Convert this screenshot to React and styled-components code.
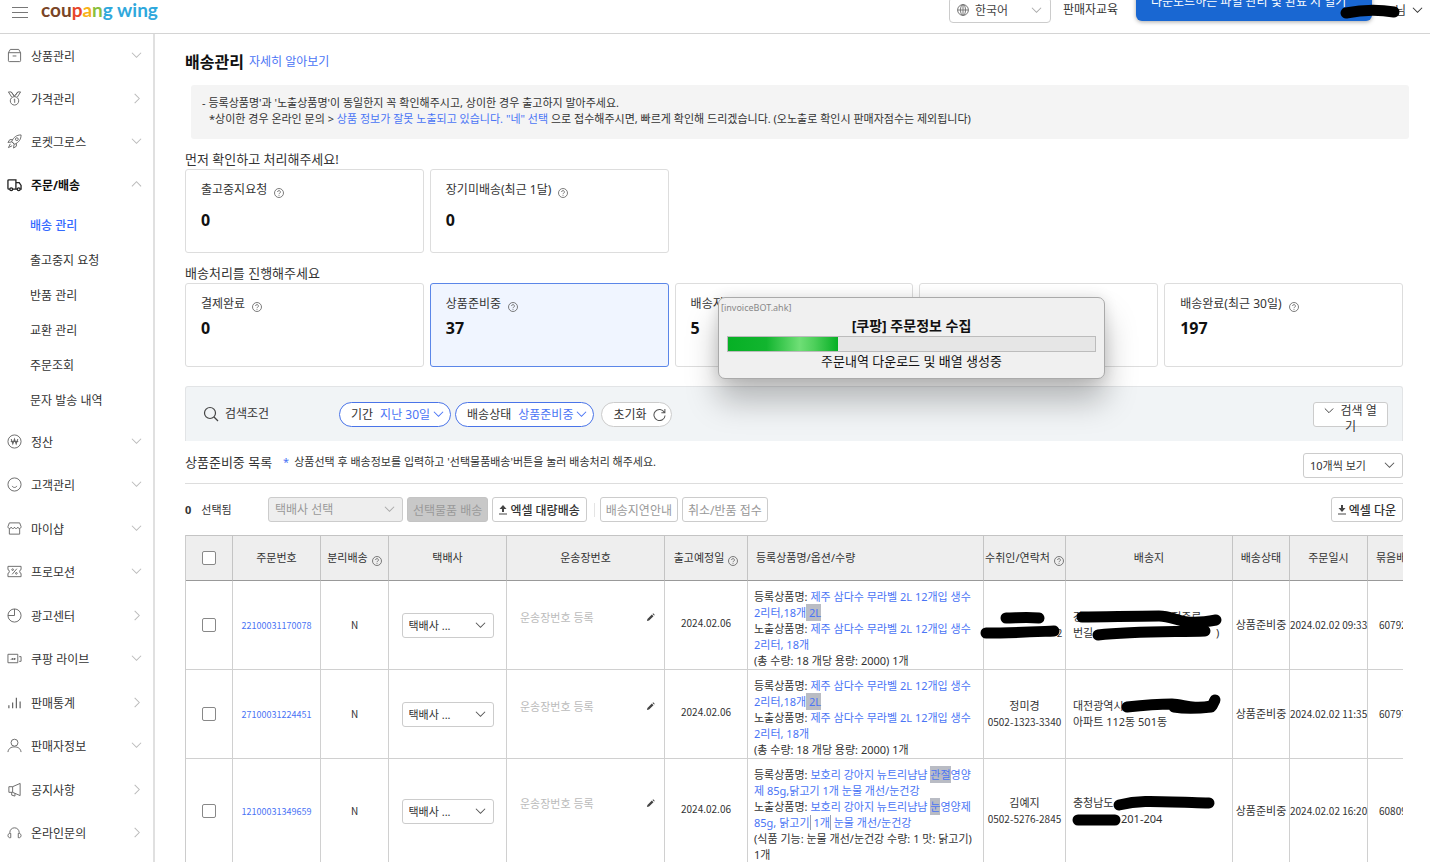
import React, { useState } from 'react';
import styled, { createGlobalStyle, css } from 'styled-components';

const GlobalStyle = createGlobalStyle`
  * {
    box-sizing: border-box;
  }

  body {
    margin: 0;
    background: #fff;
    color: #333;
    font-family: 'Noto Sans', 'Noto Sans CJK KR', sans-serif;
    font-size: 12px;
    line-height: 16px;
  }

  button, input, select {
    font-family: inherit;
    color: inherit;
  }

  a {
    color: #4a74f5;
    text-decoration: none;
  }
`;

const Page = styled.div`
  position: relative;
  height: 100vh;
  overflow: hidden;
  display: flex;
  flex-direction: column;
`;

const Header = styled.header`
  flex: none;
  display: flex;
  align-items: center;
  height: 34px;
  padding: 0 7px 13px 12px;
  border-bottom: 1px solid #d4d4d4;
`;

const MenuButton = styled.button`
  display: flex;
  padding: 4px 0 0;
  border: 0;
  background: none;
  color: #777;
`;

const Logo = styled.a`
  margin-left: 13px;
  font-family: Lato, sans-serif;
  font-size: 19px;
  font-weight: 700;
  line-height: 20px;
  color: #2fa8dc;
  white-space: pre;
`;

const LogoPart = styled.span`
  color: ${props => props.$color};
`;

const Spacer = styled.div`
  flex: 1;
`;

const LanguageBox = styled.label`
  position: relative;
  display: flex;
  align-items: center;
  width: 102px;
  height: 26px;
  padding-left: 7px;
  border: 1px solid #ccc;
  border-radius: 4px;
  color: #444;
`;

const EducationLink = styled.a`
  width: 241px;
  margin-left: 12px;
  color: #333;
`;

const UserMenu = styled.button`
  display: flex;
  align-items: center;
  height: 16px;
  margin-left: 32px;
  padding: 0;
  border: 0;
  background: none;
  font-size: 12px;
  gap: 6px;
`;

const UserName = styled.span`
  display: flex;
  z-index: 2;
`;

const DownloadBubble = styled.div`
  position: absolute;
  top: -20px;
  right: 58px;
  z-index: 1;
  width: 236px;
  height: 41px;
  padding: 14px 15px;
  border-radius: 6px;
  background: #1967d2;
  box-shadow: 0 1px 4px rgba(0, 0, 0, 0.35);
  color: #fff;
  font-size: 12px;
  line-height: 16px;
  white-space: nowrap;
`;

const Body = styled.div`
  flex: 1;
  display: flex;
  min-height: 0;
`;

const Sidebar = styled.nav`
  flex: none;
  width: 155px;
  border-right: 2px solid #e0e0e0;
`;

const MenuList = styled.ul`
  margin: 0;
  padding: 0;
  list-style: none;

  & + & > li:nth-child(even) {
    padding-bottom: 1px;
  }
`;

const MenuItem = styled.button`
  display: flex;
  align-items: center;
  width: 100%;
  height: 43px;
  padding: 0 11px 0 7px;
  border: 0;
  background: none;
  font-size: 12px;
  font-weight: ${props => (props.$open ? 700 : 400)};
  color: ${props => (props.$open ? '#111' : '#333')};
  text-align: left;
`;

const MenuLabel = styled.span`
  flex: 1;
  margin-left: 9px;
`;

const SubMenu = styled.ul`
  margin: 0;
  padding: 2px 0 2px 30px;
  list-style: none;
`;

const SubLink = styled.a`
  display: block;
  font-size: 12px;
  line-height: 35px;
  font-weight: ${props => (props.$active ? 500 : 400)};
  color: ${props => (props.$active ? '#346aff' : '#333')};
`;

const Main = styled.main`
  flex: 1;
  min-width: 0;
  padding: 16px 27px 0 30px;
`;

const TitleRow = styled.div`
  display: flex;
  align-items: center;
  gap: 5px;
`;

const Title = styled.h1`
  margin: 0;
  font-size: 16px;
  line-height: 24px;
  color: #111;
`;

const Notice = styled.p`
  margin: 11px -6px 0 6px;
  padding: 10px 11px 12px;
  border-radius: 3px;
  background: #f4f4f4;
  font-size: 11px;
  line-height: 16px;
`;

const NoticeLine = styled.span`
  display: block;
  padding-left: ${props => (props.$indent ? '7px' : 0)};
`;

const SectionTitle = styled.h2`
  margin: 11px 0 1px;
  font-size: 13px;
  font-weight: 400;
  line-height: 18px;
`;

const CardGrid = styled.div`
  display: grid;
  grid-template-columns: repeat(5, 1fr);
  gap: 6px;
`;

const Card = styled.button`
  display: flex;
  flex-direction: column;
  gap: ${props => (props.$loose ? '10px' : '4px')};
  height: 84px;
  padding: 10px 15px;
  border: 1px solid ${props => (props.$active ? '#5b86e8' : '#ddd')};
  border-radius: 3px;
  background: ${props => (props.$active ? '#f0f5ff' : '#fff')};
  text-align: left;
`;

const CardLabel = styled.span`
  display: flex;
  align-items: center;
  gap: 7px;
  font-size: 12px;
  line-height: 20px;
`;

const CardCount = styled.strong`
  font-size: 16px;
  line-height: 20px;
  color: #111;
`;

const HelpWrap = styled.span`
  display: inline-flex;
  padding-top: 5px;
  color: #666;
`;

const SearchPanel = styled.section`
  display: flex;
  align-items: center;
  height: 55px;
  margin-top: 19px;
  padding: 0 14px 0 17px;
  border: 1px solid #e2e4e6;
  border-bottom: 0;
  border-radius: 3px 3px 0 0;
  background: #f1f4f6;
`;

const SearchTitle = styled.h3`
  display: flex;
  align-items: center;
  gap: 6px;
  width: 136px;
  margin: 0;
  font-size: 12px;
  font-weight: 400;
`;

const Pill = styled.button`
  display: flex;
  align-items: center;
  height: 25px;
  margin-right: 4px;
  margin-left: ${props => (props.$plain ? '3px' : 0)};
  padding: 0 ${props => (props.$plain ? '5px' : '6px')} 0 11px;
  border: 1px solid ${props => (props.$plain ? '#ccc' : '#4a74e8')};
  border-radius: 13px;
  background: #fff;
  font-size: 12px;
  gap: ${props => (props.$plain ? '6px' : '3px')};
  white-space: nowrap;
`;

const PillValue = styled.span`
  margin-left: 4px;
  color: #4a74f5;
`;

const OpenSearch = styled.button`
  width: 75px;
  height: 25px;
  padding: 0 8px;
  border: 1px solid #ccc;
  border-radius: 3px;
  background: #fff;
  font-size: 12px;
  line-height: 16px;

  svg {
    margin-right: 3px;
    vertical-align: middle;
  }
`;

const ListHeader = styled.div`
  display: flex;
  align-items: center;
  height: 43px;
  border-bottom: 1px solid #ddd;
`;

const ListTitle = styled.h2`
  margin: 0 11px 0 0;
  font-size: 13px;
  font-weight: 400;
`;

const ListHint = styled.p`
  flex: 1;
  margin: 0;
  font-size: 11px;
`;

const Star = styled.span`
  margin-right: 5px;
  color: #4a74f5;
`;

const SelectWrap = styled.label`
  position: relative;
  display: inline-flex;
  align-items: center;
  width: ${props => props.$width};
  color: #555;
`;

const PageSize = styled(SelectWrap)`
  align-self: flex-end;
  margin-bottom: 5px;
`;

const SelectBox = styled.select`
  appearance: none;
  width: 100%;
  height: 25px;
  padding: 0 24px 0 6px;
  border: 1px solid #ccc;
  border-radius: 3px;
  background: #fff;
  color: #333;
  font-size: ${props => (props.$small ? '11px' : '12px')};

  &:disabled {
    background: #eee;
    color: #999;
    opacity: 1;
  }
`;

const LanguageSelect = styled.select`
  appearance: none;
  flex: 1;
  padding: 0 0 0 6px;
  border: 0;
  background: none;
  font-size: 12px;
`;

const SelectArrow = styled.span`
  position: absolute;
  right: 8px;
  display: flex;
  pointer-events: none;
  color: ${props => (props.$muted ? '#aaa' : 'inherit')};
`;

const Toolbar = styled.div`
  display: flex;
  align-items: center;
  height: 51px;
  font-size: 11px;
`;

const SelectedCount = styled.span`
  display: flex;
  gap: 10px;
  width: 83px;
`;

const ToolButton = styled.button`
  display: flex;
  align-items: center;
  gap: 3px;
  height: 25px;
  margin-left: 4px;
  padding: 0 5px;
  border: 1px solid #ccc;
  border-radius: 3px;
  background: #fff;
  font-size: 12px;
  white-space: nowrap;

  ${props => props.$strong && css`
    padding: 0 6px;
    font-weight: 500;
  `}

  &:disabled {
    color: #999;
  }

  ${props => props.$filled && css`
    border-color: #c4c4c4;
    background: #c8c8c8;
  `}
`;

const Divider = styled.span`
  width: 1px;
  height: 14px;
  margin: 0 1px 0 7px;
  background: #e4e4e4;
`;

const TableScroll = styled.div`
  overflow: hidden;
`;

const Table = styled.table`
  width: 1240px;
  table-layout: fixed;
  border-spacing: 0;
  border-left: 1px solid #ccc;
  font-size: 11px;
  line-height: 16px;
`;

const Th = styled.th`
  height: 46px;
  padding: 0 ${props => (props.$left ? '8px' : '0')};
  border-top: 1px solid #c4c4c4;
  border-right: 1px solid #c4c4c4;
  border-bottom: 1px solid #999;
  background: #eee;
  font-weight: 400;
  text-align: ${props => (props.$left ? 'left' : 'center')};
  white-space: nowrap;
`;

const ThInner = styled.span`
  display: flex;
  align-items: center;
  justify-content: center;
  gap: 4px;
`;

const Td = styled.td`
  padding: ${props => props.$pad || '0'};
  border-right: 1px solid #d0d0d0;
  border-bottom: 1px solid #d0d0d0;
  text-align: ${props => (props.$left ? 'left' : 'center')};
  white-space: nowrap;
`;

const NumberText = styled.span`
  font-family: 'Noto Sans CJK KR', sans-serif;
  font-size: 10px;
`;

const OrderLink = styled.a`
  font-family: 'Noto Sans CJK KR', sans-serif;
  font-size: 9px;
`;

const Checkbox = styled.input`
  appearance: none;
  display: block;
  width: 14px;
  height: 14px;
  margin: 0 auto;
  border: 1px solid #888;
  border-radius: 2px;
  background: #fff;

  &:checked {
    background: #346aff;
  }
`;

const InvoiceField = styled.label`
  display: flex;
  align-items: center;
  gap: 6px;
  padding: 0 9px 16px 13px;
`;

const InvoiceInput = styled.input`
  flex: 1;
  min-width: 0;
  padding: 0;
  border: 0;
  outline: 0;
  background: none;
  font-size: 11px;

  &::placeholder {
    color: #bbb;
  }
`;

const Highlight = styled.mark`
  padding: 1px 0;
  background: #b9bcc4;
  color: inherit;
`;

const Caret = styled.span`
  border-right: 1px solid #9aa0b0;
`;

const InkSvg = styled.svg`
  position: relative;
  z-index: 1;
  overflow: visible;
  vertical-align: top;
`;

const Dialog = styled.section`
  position: absolute;
  top: 297px;
  left: 718px;
  z-index: 3;
  width: 387px;
  padding: 2px 8px 8px;
  border: 1px solid #aaa;
  border-radius: 7px;
  background: #f0f0f0;
  box-shadow: 0 22px 32px rgba(0, 0, 0, 0.26), 0 0 14px rgba(0, 0, 0, 0.12);
  color: #111;
  font-size: 13px;
  line-height: 18px;
  text-align: center;
`;

const DialogCaption = styled.div`
  margin-left: -6px;
  color: #888;
  font-size: 9px;
  line-height: 15px;
  text-align: left;
`;

const DialogTitle = styled.h2`
  margin: 2px 0 1px;
  font-size: 14px;
  line-height: 18px;
`;

const Progress = styled.progress`
  appearance: none;
  display: block;
  width: 100%;
  height: 16px;
  border: 1px solid #bcbcbc;

  &::-webkit-progress-bar {
    background: #e6e6e6;
  }

  &::-webkit-progress-value {
    background: linear-gradient(90deg, #06b025 0%, #12b52f 35%, #6fdf76 65%, #4fd05c 78%, #06b025 100%);
  }
`;

const DialogStatus = styled.p`
  margin: 0;
`;

const chevrons = {
  down: 'M1 3l5 5 5-5',
  up: 'M1 8l5-5 5 5',
  right: 'M4 1l5 5-5 5'
};

const Chevron = ({ dir = 'down', size = 11, color = 'currentColor' }) => (
  <svg width={size} height={size} viewBox="0 0 12 12" fill="none" stroke={color} strokeWidth="1.1">
    <path d={chevrons[dir]} />
  </svg>
);

const Help = () => (
  <HelpWrap>
    <svg width="10" height="10" viewBox="0 0 20 20" fill="none" stroke="currentColor" strokeWidth="1.7">
      <circle cx="10" cy="10" r="9" />
      <path d="M7.2 8a2.8 2.8 0 1 1 4.2 2.4c-.9.5-1.4 1-1.4 2M10 14v1.6" />
    </svg>
  </HelpWrap>
);

// Marker stroke that hides private text, sized to the gap it covers
const Ink = ({ width, d, stroke = 11 }) => (
  <InkSvg width={width} height="16" fill="none" stroke="#000" strokeWidth={stroke} strokeLinecap="round" strokeLinejoin="round" aria-hidden="true">
    <path d={d} />
  </InkSvg>
);

const icons = {
  box: <path d="M3.5 1.5h9l2 3.5v8.5a1 1 0 0 1-1 1h-11a1 1 0 0 1-1-1V5zM1.5 5h13M6 8.5h4" />,
  medal: (
    <>
      <circle cx="8" cy="10.5" r="4.5" />
      <path d="M5 6.500L1.500 1h3L8 5.500 11.500 1h3L11 6.500M4.500 1L8 6M11.500 1L9 4.500M7.200 9.200L8.200 8.600v4" />
    </>
  ),
  rocket: (
    <>
      <path d="M5 8C7 3.500 10 1 15 1c0 5-2.500 8-7 10zM6 6H3L1 9l4-.5M10 10v3l-3 2 .5-4M3.500 10.500L1.500 14.500 5.500 12.500M5 8l3 3" />
      <circle cx="10.5" cy="5.5" r="1.5" />
    </>
  ),
  truck: (
    <>
      <path d="M3 13H2a1 1 0 0 1-1-1V4a1 1 0 0 1 1-1h7.500v10H6M9.500 6H13l2 3v4h-1M11 13H9.500" strokeWidth="1.4" />
      <circle cx="4.5" cy="13" r="1.5" strokeWidth="1.4" />
      <circle cx="12.5" cy="13" r="1.5" strokeWidth="1.4" />
    </>
  ),
  won: (
    <>
      <circle cx="8" cy="8" r="7" />
      <path d="M4.500 5.500L6.200 10.500 8 5.500 9.800 10.500 11.500 5.500M4 8h8" strokeWidth="1.2" />
    </>
  ),
  smile: (
    <>
      <circle cx="8" cy="8" r="7" />
      <path d="M5.500 9.500c.8 2.200 4.200 2.200 5 0" />
    </>
  ),
  shop: <path d="M2.500 2h11l1.500 4c0 1.500-1 2-1.700 2-.8 0-1.800-.6-1.800-1.600 0 1-.9 1.600-1.800 1.600S8 7.400 8 6.400C8 7.400 7.200 8 6.300 8s-1.800-.6-1.800-1.600C4.500 7.400 3.500 8 2.700 8 2 8 1 7.500 1 6zM2.500 8v6h11V8" />,
  coupon: (
    <>
      <path d="M1 2.500h14V6c-2 0-2 4 0 4v3.500H1V10c2 0 2-4 0-4zM10.500 5l-5 6" />
      <circle cx="6" cy="6" r=".9" />
      <circle cx="10" cy="10" r=".9" />
    </>
  ),
  pie: (
    <>
      <circle cx="8" cy="8" r="7" />
      <path d="M8 1v7H1" />
    </>
  ),
  live: <path d="M1 3.500h10.500v9H1zM13 6h2v5h-2M4 9.500l2-2v2l2-2v2l1-1.500" />,
  stats: <path d="M2 11v3M6 8v6M10 3v11M14 7v7" strokeWidth="1.3" />,
  person: (
    <>
      <circle cx="8" cy="5" r="3.7" />
      <path d="M1 15c.5-4 3.500-5.500 7-5.500s6.500 1.500 7 5.500" />
    </>
  ),
  horn: <path d="M2 5h4l8-3.500v13L6 11H2zM6 5v6M5 11v3l3.500 1V12" />,
  headset: <path d="M3 9V8a5 5 0 0 1 10 0v1M3 9H2.500C.5 9.500.5 13 2.500 13.500H4V9zM13 9h.5c2 .5 2 4 0 4.500H12V9z" />
};

const MenuIcon = ({ name, dark }) => (
  <svg width="15" height="15" viewBox="0 0 16 16" fill="none" stroke={dark ? '#222' : '#666'} strokeWidth="1">
    {icons[name]}
  </svg>
);

const ArrowIcon = ({ down }) => (
  <svg width="8" height="10" viewBox="0 0 8 10" fill="#444">
    <path d={down ? 'M3 0h2v3h2.500L4 7 .5 3H3z' : 'M3 7h2V4h2.500L4 0 .5 4H3z'} />
    <path d="M0 8.500h8v1H0z" />
  </svg>
);

const topMenu = [
  { label: '상품관리', icon: 'box', dir: 'down' },
  { label: '가격관리', icon: 'medal', dir: 'right' },
  { label: '로켓그로스', icon: 'rocket', dir: 'down' },
  { label: '주문/배송', icon: 'truck', dir: 'up', open: true }
];

const subMenu = ['배송 관리', '출고중지 요청', '반품 관리', '교환 관리', '주문조회', '문자 발송 내역'];

const bottomMenu = [
  { label: '정산', icon: 'won', dir: 'down' },
  { label: '고객관리', icon: 'smile', dir: 'down' },
  { label: '마이샵', icon: 'shop', dir: 'down' },
  { label: '프로모션', icon: 'coupon', dir: 'down' },
  { label: '광고센터', icon: 'pie', dir: 'right' },
  { label: '쿠팡 라이브', icon: 'live', dir: 'down' },
  { label: '판매통계', icon: 'stats', dir: 'right' },
  { label: '판매자정보', icon: 'person', dir: 'down' },
  { label: '공지사항', icon: 'horn', dir: 'right' },
  { label: '온라인문의', icon: 'headset', dir: 'right' }
];

const columns = [47, 88, 68, 118, 158, 83, 236, 82, 167, 57, 78, 58];

const waterProduct = (
  <>
    등록상품명: <a href="#product">제주 삼다수 무라벨 2L 12개입 생수<br />2리터,18개<Highlight> 2L</Highlight></a><br />
    노출상품명: <a href="#product">제주 삼다수 무라벨 2L 12개입 생수<br />2리터, 18개</a><br />
    (총 수량: 18 개당 용량: 2000) 1개
  </>
);

const orders = [
  {
    id: '22100031170078',
    time: '2024.02.02 09:33',
    bundle: '60792',
    product: waterProduct,
    receiver: (
      <>
        <Ink width={46} d="M4 9c10 0 20-1 33 0" /><br />
        <Ink width={70} d="M-1 8c24 0 44-1 68-2" /><NumberText>2</NumberText>
      </>
    ),
    address: (
      <>
        강<Ink width={88} d="M-1 8C22 8 50 7 76 7c18 0 20 11 57 4" />정주로<br />
        번길<Ink width={120} d="M5 10C40 6 80 7 112 6" /> )
      </>
    )
  },
  {
    id: '27100031224451',
    time: '2024.02.02 11:35',
    bundle: '60797',
    product: waterProduct,
    receiver: <>정미경<br /><NumberText>0502-1323-3340</NumberText></>,
    address: (
      <>
        대전광역시<Ink width={90} d="M3 9c18-2 33-3 45-3 12 0 18 6 40 2l3-6M50 9c12 2 28 1 37 0" /><br />
        아파트 112동 501동
      </>
    )
  },
  {
    id: '12100031349659',
    time: '2024.02.02 16:20',
    bundle: '60809',
    product: (
      <>
        등록상품명: <a href="#product">보호리 강아지 뉴트리냠냠 <Highlight>관절</Highlight>영양<br />제 85g,닭고기 1개 눈물 개선/눈건강</a><br />
        노출상품명: <a href="#product">보호리 강아지 뉴트리냠냠 <Highlight>눈</Highlight>영양제<br />85g, 닭고기<Caret /> 1개<Caret /> 눈물 개선/눈건강</a><br />
        (식품 기능: 눈물 개선/눈건강 수량: 1 맛: 닭고기)<br />
        1개
      </>
    ),
    receiver: <>김예지<br /><NumberText>0502-5276-2845</NumberText></>,
    address: (
      <>
        충청남도 <Ink width={94} d="M3 10c20-5 30-4 90-2" /><br />
        <Ink width={48} d="M5 9h37" />201-204
      </>
    )
  }
];

const Menu = ({ items, children }) => (
  <MenuList>
    {items.map((item) => (
      <li key={item.label}>
        <MenuItem type="button" $open={item.open}>
          <MenuIcon name={item.icon} dark={item.open} />
          <MenuLabel>{item.label}</MenuLabel>
          <Chevron dir={item.dir} color="#bbb" />
        </MenuItem>
        {item.open && children}
      </li>
    ))}
  </MenuList>
);

const StatusCard = ({ label, count, active, loose }) => (
  <Card type="button" $active={active} $loose={loose}>
    {label && <CardLabel>{label} <Help /></CardLabel>}
    <CardCount>{count}</CardCount>
  </Card>
);

const OrderRow = ({ order, checked, onToggle }) => (
  <tr>
    <Td>
      <Checkbox type="checkbox" aria-label={`주문 ${order.id} 선택`} checked={checked} onChange={onToggle} />
    </Td>
    <Td><OrderLink href="#order">{order.id}</OrderLink></Td>
    <Td><NumberText>N</NumberText></Td>
    <Td>
      <SelectWrap $width="92px">
        <SelectBox $small aria-label="택배사">
          <option>택배사 ...</option>
        </SelectBox>
        <SelectArrow><Chevron /></SelectArrow>
      </SelectWrap>
    </Td>
    <Td>
      <InvoiceField>
        <InvoiceInput type="text" placeholder="운송장번호 등록" aria-label="운송장번호" />
        <svg width="9" height="9" viewBox="0 0 10 10" fill="#444">
          <path d="M1 9l.6-2.400L6.500 1.800l1.800 1.800L3.400 8.400zM7.200 1.200L8 .4l1.800 1.800-.8.700z" />
        </svg>
      </InvoiceField>
    </Td>
    <Td $pad="0 0 4px"><NumberText>2024.02.06</NumberText></Td>
    <Td $left $pad="8px 0 0 6px">{order.product}</Td>
    <Td>{order.receiver}</Td>
    <Td $left $pad="0 0 0 7px">{order.address}</Td>
    <Td>상품준비중</Td>
    <Td><NumberText>{order.time}</NumberText></Td>
    <Td $left $pad="0 0 0 11px"><NumberText>{order.bundle}</NumberText></Td>
  </tr>
);

const App = () => {
  const [selected, setSelected] = useState([]);
  const allSelected = selected.length === orders.length;

  const toggleOrder = (id) => {
    setSelected(selected.includes(id) ? selected.filter((item) => item !== id) : [...selected, id]);
  };

  return (
    <Page>
      <GlobalStyle />
      <Header>
        <MenuButton type="button" aria-label="메뉴">
          <svg width="16" height="11" viewBox="0 0 16 11" stroke="currentColor">
            <path d="M0 .5h16M0 5.500h16M0 10.500h16" />
          </svg>
        </MenuButton>
        <Logo href="#home">
          <LogoPart $color="#7a4526">cou</LogoPart>
          <LogoPart $color="#e8452c">p</LogoPart>
          <LogoPart $color="#f8b218">a</LogoPart>
          <LogoPart $color="#8bbf3c">n</LogoPart>
          g wing
        </Logo>
        <Spacer />
        <LanguageBox>
          <svg width="12" height="12" viewBox="0 0 12 12" fill="none" stroke="#777">
            <circle cx="6" cy="6" r="5.4" />
            <ellipse cx="6" cy="6" rx="2.5" ry="5.4" />
            <path d="M6 .6v10.800M.6 6h10.800" />
          </svg>
          <LanguageSelect aria-label="언어">
            <option>한국어</option>
          </LanguageSelect>
          <SelectArrow $muted><Chevron /></SelectArrow>
        </LanguageBox>
        <EducationLink href="#education">판매자교육</EducationLink>
        <UserMenu type="button">
          <UserName><Ink width={59} d="M10 12c15-3 30-4 48-1" />님</UserName>
          <Chevron />
        </UserMenu>
      </Header>
      <DownloadBubble>다운로드하는 파일 관리 및 완료 시 열기</DownloadBubble>

      <Body>
        <Sidebar>
          <Menu items={topMenu}>
            <SubMenu>
              {subMenu.map((label, index) => (
                <li key={label}>
                  <SubLink href="#menu" $active={index === 0}>{label}</SubLink>
                </li>
              ))}
            </SubMenu>
          </Menu>
          <Menu items={bottomMenu} />
        </Sidebar>

        <Main>
          <TitleRow>
            <Title>배송관리</Title>
            <a href="#more">자세히 알아보기</a>
          </TitleRow>
          <Notice>
            <NoticeLine>- 등록상품명'과 '노출상품명'이 동일한지 꼭 확인해주시고, 상이한 경우 출고하지 말아주세요.</NoticeLine>
            <NoticeLine $indent>
              *상이한 경우 온라인 문의 &gt; <a href="#inquiry">상품 정보가 잘못 노출되고 있습니다. "네" 선택</a> 으로 접수해주시면, 빠르게 확인해 드리겠습니다. (오노출로 확인시 판매자점수는 제외됩니다)
            </NoticeLine>
          </Notice>

          <SectionTitle>먼저 확인하고 처리해주세요!</SectionTitle>
          <CardGrid>
            <StatusCard label="출고중지요청" count={0} loose />
            <StatusCard label="장기미배송(최근 1달)" count={0} loose />
          </CardGrid>

          <SectionTitle>배송처리를 진행해주세요</SectionTitle>
          <CardGrid>
            <StatusCard label="결제완료" count={0} />
            <StatusCard label="상품준비중" count={37} active />
            <StatusCard label="배송지시" count={5} />
            <StatusCard />
            <StatusCard label="배송완료(최근 30일)" count={197} />
          </CardGrid>

          <SearchPanel>
            <SearchTitle>
              <svg width="16" height="16" viewBox="0 0 16 16" fill="none" stroke="#444" strokeWidth="1.2">
                <circle cx="7" cy="7" r="5.5" />
                <path d="M11 11l4 4" />
              </svg>
              검색조건
            </SearchTitle>
            <Pill type="button">기간 <PillValue>지난 30일</PillValue><Chevron color="#4a74f5" /></Pill>
            <Pill type="button">배송상태 <PillValue>상품준비중</PillValue><Chevron color="#4a74f5" /></Pill>
            <Pill type="button" $plain>
              초기화
              <svg width="13" height="13" viewBox="0 0 14 14" fill="none" stroke="#555" strokeWidth="1.1">
                <path d="M12.200 4.500A6 6 0 1 0 13 8M12.800 1v4H9" />
              </svg>
            </Pill>
            <Spacer />
            <OpenSearch type="button"><Chevron size={10} /> 검색 열기</OpenSearch>
          </SearchPanel>

          <ListHeader>
            <ListTitle>상품준비중 목록</ListTitle>
            <ListHint><Star>*</Star>상품선택 후 배송정보를 입력하고 '선택물품배송'버튼을 눌러 배송처리 해주세요.</ListHint>
            <PageSize $width="100px">
              <SelectBox $small aria-label="페이지당 개수">
                <option>10개씩 보기</option>
              </SelectBox>
              <SelectArrow><Chevron /></SelectArrow>
            </PageSize>
          </ListHeader>

          <Toolbar>
            <SelectedCount><strong>{selected.length}</strong>선택됨</SelectedCount>
            <SelectWrap $width="135px">
              <SelectBox disabled aria-label="택배사 선택">
                <option>택배사 선택</option>
              </SelectBox>
              <SelectArrow $muted><Chevron /></SelectArrow>
            </SelectWrap>
            <ToolButton type="button" disabled $filled>선택물품 배송</ToolButton>
            <ToolButton type="button" $strong><ArrowIcon />엑셀 대량배송</ToolButton>
            <Divider />
            <ToolButton type="button" disabled>배송지연안내</ToolButton>
            <ToolButton type="button" disabled>취소/반품 접수</ToolButton>
            <Spacer />
            <ToolButton type="button" $strong><ArrowIcon down />엑셀 다운</ToolButton>
          </Toolbar>

          <TableScroll>
            <Table>
              <colgroup>
                {columns.map((width, index) => <col key={index} width={width} />)}
              </colgroup>
              <thead>
                <tr>
                  <Th>
                    <Checkbox
                      type="checkbox"
                      aria-label="전체 선택"
                      checked={allSelected}
                      onChange={() => setSelected(allSelected ? [] : orders.map((order) => order.id))}
                    />
                  </Th>
                  <Th>주문번호</Th>
                  <Th><ThInner>분리배송 <Help /></ThInner></Th>
                  <Th>택배사</Th>
                  <Th>운송장번호</Th>
                  <Th><ThInner>출고예정일 <Help /></ThInner></Th>
                  <Th $left>등록상품명/옵션/수량</Th>
                  <Th><ThInner>수취인/연락처 <Help /></ThInner></Th>
                  <Th>배송지</Th>
                  <Th>배송상태</Th>
                  <Th>주문일시</Th>
                  <Th $left>묶음배송</Th>
                </tr>
              </thead>
              <tbody>
                {orders.map((order) => (
                  <OrderRow
                    key={order.id}
                    order={order}
                    checked={selected.includes(order.id)}
                    onToggle={() => toggleOrder(order.id)}
                  />
                ))}
              </tbody>
            </Table>
          </TableScroll>
        </Main>
      </Body>

      <Dialog role="dialog" aria-label="주문정보 수집">
        <DialogCaption>[invoiceBOT.ahk]</DialogCaption>
        <DialogTitle>[쿠팡] 주문정보 수집</DialogTitle>
        <Progress value="30" max="100" aria-label="진행률" />
        <DialogStatus>주문내역 다운로드 및 배열 생성중</DialogStatus>
      </Dialog>
    </Page>
  );
};

export default App;
